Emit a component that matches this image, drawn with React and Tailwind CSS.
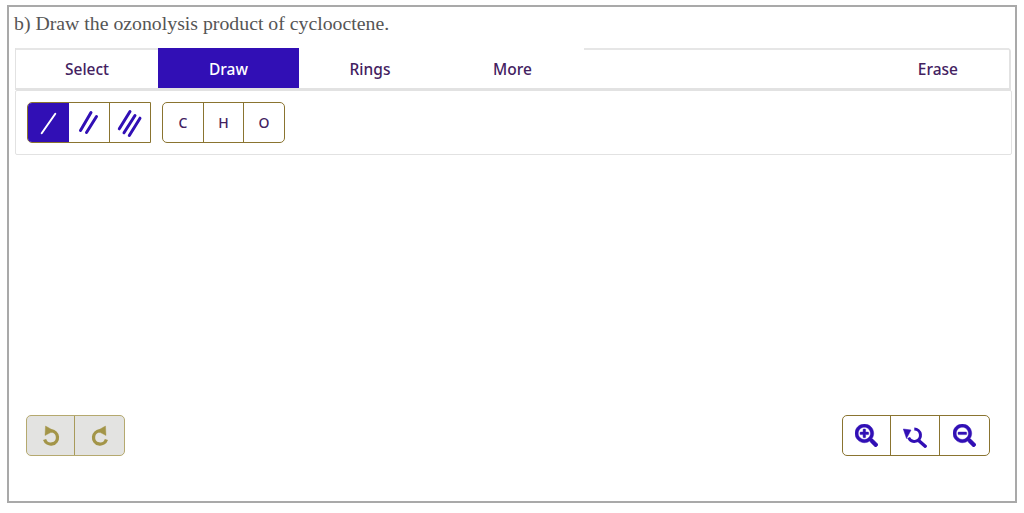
import React from "react";
import { FaSearchPlus, FaSearchMinus } from "react-icons/fa";

const TABS = [
  { label: "Select", pad: "w-[142px]" },
  { label: "Draw", pad: "w-[141px]", active: true },
  { label: "Rings", pad: "w-[142px]" },
  { label: "More", pad: "w-[143px]" },
];

const BONDS = {
  1: [[7.7, 25.2, 21.3, 5.8]],
  2: [
    [6.5, 22.5, 17, 4.5],
    [12.5, 24.5, 22.5, 8.5],
  ],
  3: [
    [4.3, 20.8, 15, 3.5],
    [9, 24.8, 20, 7.5],
    [14.3, 27.5, 25, 10.2],
  ],
};

function Bonds({ count, color }) {
  return (
    <svg width="30" height="30" viewBox="0 0 30 30">
      {BONDS[count].map(([x1, y1, x2, y2]) => (
        <line
          key={x1}
          x1={x1}
          y1={y1}
          x2={x2}
          y2={y2}
          stroke={color}
          strokeWidth={count === 1 ? 2 : 3}
          strokeLinecap="round"
        />
      ))}
    </svg>
  );
}

// heavier than the package's undo, redo is the same drawing flipped
function UndoArrow({ className }) {
  return (
    <svg className={className} width="20" height="22" viewBox="0 0 20 22" fill="none" stroke="#a39548">
      <path d="M10 5.9A6.6 6.6 0 1 1 3.6 14.5" strokeWidth="3.3" />
      <path d="M4.5 1 L13 5.8 L4 10.5 Z" fill="#a39548" strokeWidth="0.4" />
    </svg>
  );
}

// magnifier with the arrow round it, the packages have no such icon
function ZoomReset() {
  return (
    <svg width="24" height="24" viewBox="0 0 24 24" fill="none" stroke="#310fb5">
      <path d="M11.3 5A6.2 6.2 0 1 1 5.6 13.7" strokeWidth="3" />
      <path d="M0.3 5 L8 6 L3.5 14.5 Z" fill="#310fb5" strokeWidth="0.5" />
      <path d="M16.5 17.2 L22.2 22.2" strokeWidth="3.4" strokeLinecap="round" />
    </svg>
  );
}

export default function App() {
  return (
    <div className="w-[1024px] h-[513px] bg-white pt-[5px] pl-[7px] overflow-hidden font-['Noto_Sans',sans-serif]">
      <div className="w-[1010px] h-[498px] border-2 border-[#a9a9a9] flex flex-col px-[6px]">
        <div className="h-[41px] pt-[5px] -ml-[1px] font-['Liberation_Serif',serif] text-[19.8px] leading-[23px] text-[#555]">
          b) Draw the ozonolysis product of cyclooctene.
        </div>

        <div className="w-[996px] h-[42px] flex items-stretch relative border-b-2 border-r-2 border-l border-[#e2e2e2] rounded-tr-[4px] text-[15.5px] font-medium text-[#43215f]">
          {TABS.map((t) => (
            <div
              key={t.label}
              className={
                t.active
                  ? `${t.pad} flex items-center justify-center pt-[3px] bg-[#310fb5] text-white h-[40px]`
                  : `${t.pad} flex items-center justify-center pt-[3px] h-[40px]`
              }
            >
              {t.label}
            </div>
          ))}
          <div className="flex-1 flex items-center justify-end pr-[51px] pt-[2px] border-t-2 border-[#e6e6e6]">Erase</div>
          <div className="absolute left-0 top-0 w-[142px] border-t-2 border-[#e6e6e6]" />
        </div>

        <div className="w-[997px] h-[65px] border border-[#e2e2e2] rounded-[2px] flex items-start pl-[11px] pt-[11px] gap-[11px]">
          <div className="flex h-[41px] w-[124px] border border-[#8a7430] rounded-l-[5px] overflow-hidden">
            <div className="w-[41px] bg-[#310fb5] flex items-center justify-center">
              <Bonds count={1} color="#ffffff" />
            </div>
            <div className="w-[41px] border-r border-[#8a7430] flex items-center justify-center">
              <Bonds count={2} color="#310fb5" />
            </div>
            <div className="flex-1 flex items-center justify-center">
              <Bonds count={3} color="#310fb5" />
            </div>
          </div>
          <div className="flex h-[41px] w-[123px] border border-[#8a7430] rounded-[5px] text-[14px] font-medium text-[#43215f]">
            <div className="w-[41px] border-r border-[#8a7430] flex items-center justify-center">C</div>
            <div className="w-[40px] border-r border-[#8a7430] flex items-center justify-center">H</div>
            <div className="flex-1 flex items-center justify-center">O</div>
          </div>
        </div>

        <div className="flex-1 flex items-end justify-between pl-[11px] pr-[19px] pb-[45px]">
          <div className="flex h-[41px] w-[99px] border border-[#b5a96f] rounded-[5px] bg-[#e3e3e1]">
            <div className="w-[48px] border-r border-[#a89a5a] flex items-center justify-center">
              <UndoArrow />
            </div>
            <div className="flex-1 flex items-center justify-center">
              <UndoArrow className="-scale-x-100" />
            </div>
          </div>
          <div className="flex h-[41px] w-[148px] border border-[#8a7430] rounded-[5px] text-[#310fb5]">
            <div className="w-[48px] border-r border-[#8a7430] flex items-center justify-center">
              <FaSearchPlus size={23} stroke="currentColor" strokeWidth={10} />
            </div>
            <div className="w-[49px] border-r border-[#8a7430] flex items-center justify-center">
              <ZoomReset />
            </div>
            <div className="flex-1 flex items-center justify-center">
              <FaSearchMinus size={23} stroke="currentColor" strokeWidth={10} />
            </div>
          </div>
        </div>
      </div>
    </div>
  );
}
